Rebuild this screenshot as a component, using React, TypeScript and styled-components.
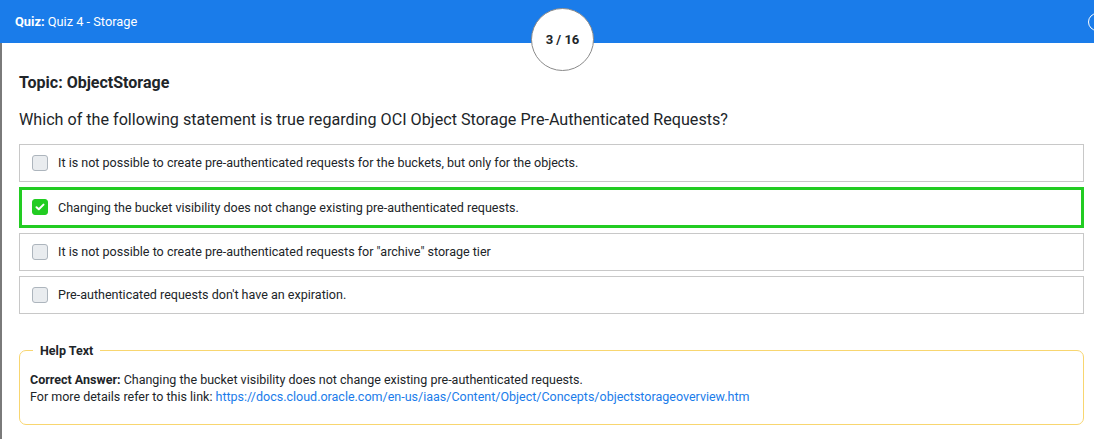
import React from "react";
import styled, { createGlobalStyle } from "styled-components";

const Global = createGlobalStyle`
  html, body { margin: 0; padding: 0; background: #fff; }
  body { font-family: Roboto, "Liberation Sans", Arial, sans-serif; color: #212529; overflow: hidden; }
  * { box-sizing: border-box; }
`;

const Page = styled.div`
  width: 1094px;
  height: 439px;
  position: relative;
  overflow: hidden;
  display: flex;
  flex-direction: column;
`;

const Header = styled.header`
  height: 43px;
  background: #1a7cea;
  color: #fff;
  display: flex;
  align-items: center;
  justify-content: space-between;
  padding: 0 0 0 15px;
  font-size: 12.8px;
`;

const HeaderTitle = styled.div`
  b { font-weight: 700; }
`;

const CloseCircle = styled.div`
  width: 18px;
  height: 18px;
  border: 1.5px solid #fff;
  border-radius: 50%;
  margin-right: -12px;
`;

const Counter = styled.div`
  position: absolute;
  left: 531px;
  top: 8px;
  width: 63px;
  height: 63px;
  border-radius: 50%;
  background: #fff;
  border: 1px solid #8a8a8a;
  display: flex;
  align-items: center;
  justify-content: center;
  font-weight: 700;
  font-size: 13px;
  color: #212529;
`;

const Body = styled.main`
  flex: 1;
  border-left: 2px solid #7a7a7a;
  padding: 30px 10px 0 17px;
  display: flex;
  flex-direction: column;
`;

const Topic = styled.h2`
  margin: 0;
  font-size: 16px;
  font-weight: 700;
  line-height: 19px;
`;

const Question = styled.p`
  margin: 18px 0 0;
  font-size: 16.15px;
  line-height: 19px;
`;

const Options = styled.div`
  margin-top: 15px;
  display: flex;
  flex-direction: column;
  gap: 5px;
`;

const Option = styled.div<{ $selected?: boolean }>`
  display: flex;
  align-items: center;
  gap: 10px;
  height: ${(p) => (p.$selected ? 41 : 38)}px;
  border: ${(p) => (p.$selected ? "3px solid #22cc22" : "1px solid #c8c8c8")};
  padding-left: ${(p) => (p.$selected ? 10 : 12)}px;
  font-size: 12.55px;
  line-height: 15px;
  padding-bottom: 1px;
`;

const Box = styled.span<{ $checked?: boolean }>`
  width: 16px;
  height: 16px;
  flex: none;
  border-radius: 3px;
  background: ${(p) => (p.$checked ? "#22cc22" : "#e9ecef")};
  border: 1px solid ${(p) => (p.$checked ? "#22cc22" : "#adb5bd")};
  display: flex;
  align-items: center;
  justify-content: center;
`;

const Fieldset = styled.fieldset`
  margin: 28px 0 0;
  padding: 12px 10px 19px 10px;
  border: 1px solid #f8d670;
  border-radius: 7px;
  font-size: 12.5px;
  line-height: 17px;
`;

const Legend = styled.legend`
  font-weight: 700;
  font-size: 12.5px;
  padding: 0 7px;
  margin-left: 3px;
`;

const Link = styled.a`
  color: #1a7cea;
  text-decoration: none;
`;

const options = [
  "It is not possible to create pre-authenticated requests for the buckets, but only for the objects.",
  "Changing the bucket visibility does not change existing pre-authenticated requests.",
  'It is not possible to create pre-authenticated requests for "archive" storage tier',
  "Pre-authenticated requests don't have an expiration.",
];

export default function App() {
  return (
    <Page>
      <Global />
      <Header>
        <HeaderTitle>
          <b>Quiz:</b> Quiz 4 - Storage
        </HeaderTitle>
        <CloseCircle />
      </Header>
      <Counter>3 / 16</Counter>
      <Body>
        <Topic>Topic: ObjectStorage</Topic>
        <Question>
          Which of the following statement is true regarding OCI Object Storage Pre-Authenticated Requests?
        </Question>
        <Options>
          {options.map((o, i) => (
            <Option key={i} $selected={i === 1}>
              <Box $checked={i === 1}>
                {i === 1 && (
                  <svg width="10" height="8" viewBox="0 0 10 8">
                    <path d="M1.5 4.2 L3.8 6.3 L8.5 1.6" fill="none" stroke="#fff" strokeWidth="2" strokeLinecap="round" strokeLinejoin="round" />
                  </svg>
                )}
              </Box>
              {o}
            </Option>
          ))}
        </Options>
        <Fieldset>
          <Legend>Help Text</Legend>
          <div>
            <b>Correct Answer:</b> Changing the bucket visibility does not change existing pre-authenticated requests.
          </div>
          <div>
            For more details refer to this link:{" "}
            <Link href="#">https://docs.cloud.oracle.com/en-us/iaas/Content/Object/Concepts/objectstorageoverview.htm</Link>
          </div>
        </Fieldset>
      </Body>
    </Page>
  );
}
